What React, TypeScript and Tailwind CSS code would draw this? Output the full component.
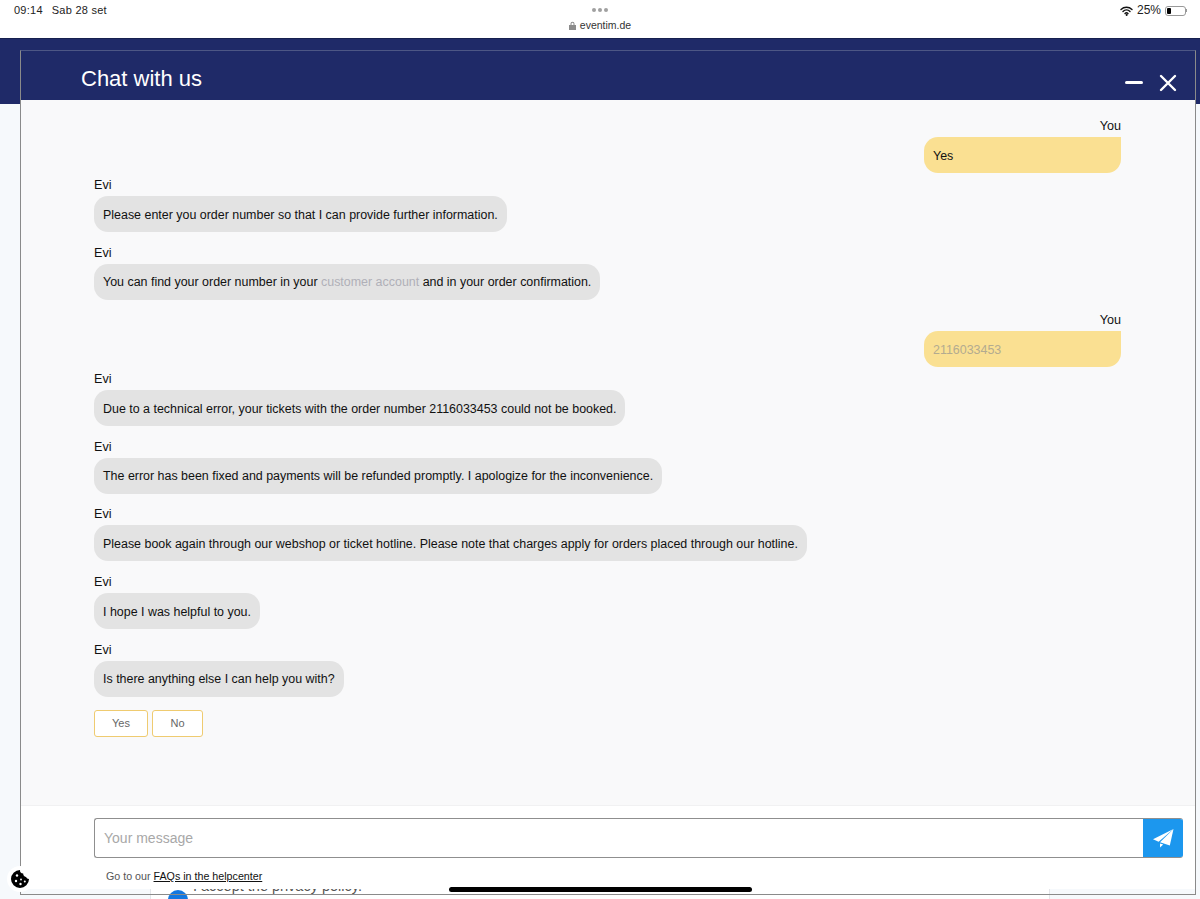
type Message = { from: "Evi" | "You"; text: React.ReactNode; muted?: boolean };

const messages: Message[] = [
  { from: "You", text: "Yes" },
  { from: "Evi", text: "Please enter you order number so that I can provide further information." },
  {
    from: "Evi",
    text: (
      <>
        You can find your order number in your <span className="text-[#b0b0b8]">customer account</span> and in your order confirmation.
      </>
    ),
  },
  { from: "You", text: "2116033453", muted: true },
  { from: "Evi", text: "Due to a technical error, your tickets with the order number 2116033453 could not be booked." },
  { from: "Evi", text: "The error has been fixed and payments will be refunded promptly. I apologize for the inconvenience." },
  { from: "Evi", text: "Please book again through our webshop or ticket hotline. Please note that charges apply for orders placed through our hotline." },
  { from: "Evi", text: "I hope I was helpful to you." },
  { from: "Evi", text: "Is there anything else I can help you with?" },
];

export default function App() {
  return (
    <div className="relative h-[899px] w-[1200px] overflow-hidden bg-[#f6f9fc] font-['Liberation_Sans',Arial,sans-serif] text-[#111]">
      <StatusBar />
      <div className="h-[66px] border-t border-[#16204f] bg-[#1f2a68]" />
      <PageBehind />

      <div className="absolute left-[20px] top-[50px] flex h-[845px] w-[1176px] flex-col border border-[#8a8a8a] border-t-[#4d5785]">
        <header className="flex h-[49px] shrink-0 items-center justify-between bg-[#1f2a68] pl-[60px] pr-[18px] pt-[6px] text-white">
          <h1 className="text-[22px] leading-none">Chat with us</h1>
          <div className="mt-[8px] flex items-center gap-[16px]">
            <span className="h-[3px] w-[18px] rounded-sm bg-white" />
            <svg width="18" height="18" viewBox="0 0 18 18" fill="none" stroke="white" strokeWidth="2.4" strokeLinecap="round">
              <path d="M2 2 16 16M16 2 2 16" />
            </svg>
          </div>
        </header>

        <main className="flex flex-1 flex-col bg-[#f9f9fa] pl-[73px] pr-[74px] pt-[17px]">
          {messages.map((m, i) => (
            <Bubble key={i} message={m} />
          ))}
          <div className="mt-[1.4px] flex gap-[4px]">
            <ReplyButton label="Yes" width="w-[54px]" />
            <ReplyButton label="No" width="w-[51px]" />
          </div>
        </main>

        <footer className="relative mb-[5px] h-[84px] shrink-0 border-t border-[#f1f1f2] bg-white pl-[73px] pr-[12px] pt-[12px]">
          <div className="flex h-[40px] overflow-hidden rounded-[3px] border border-[#8f8f8f] border-r-0">
            <div className="flex flex-1 items-center pl-[9px] text-[14px] text-[#a8a8a8]">Your message</div>
            <button className="flex w-[40px] items-center justify-center bg-[#1c97ee]">
              <svg width="21" height="19" viewBox="0 0 21 19" fill="white">
                <path d="M20.5 0 0 10.2l5.6 2.6Z" />
                <path d="M20.5 0 7 13.2l9.8 3.4Z" />
                <path d="M7 14.4V18.6l3.2-3.2Z" />
              </svg>
            </button>
          </div>
          <p className="ml-[12px] mt-[11px] text-[10.7px] leading-[15px] text-[#555]">
            Go to our <span className="text-[#111] underline">FAQs in the helpcenter</span>
          </p>
        </footer>
      </div>

      <CookieButton />
      <div className="absolute left-[449px] top-[887px] h-[5px] w-[303px] rounded-full bg-black" />
    </div>
  );
}

function StatusBar() {
  return (
    <div className="relative flex h-[38px] items-start justify-between bg-white pl-[14px] pr-[13px] pt-[3px] text-[11px] leading-[15px] text-[#222]">
      <div className="flex gap-[9px] tracking-[0.25px]">
        <span>09:14</span>
        <span>Sab 28 set</span>
      </div>
      <div className="absolute left-0 right-0 top-[8px] flex flex-col items-center">
        <div className="flex gap-[2px]">
          <span className="size-[4px] rounded-full bg-[#a0a0a0]" />
          <span className="size-[4px] rounded-full bg-[#a0a0a0]" />
          <span className="size-[4px] rounded-full bg-[#a0a0a0]" />
        </div>
        <div className="mt-[6px] flex items-center gap-[4px] text-[10.5px] leading-[14px] text-[#333]">
          <svg width="7" height="9" viewBox="0 0 7 9" fill="#8c8c8c">
            <path d="M1.5 4V2.8a2 2 0 0 1 4 0V4H7v5H0V4Zm1 0h2V2.8a1 1 0 0 0-2 0Z" />
          </svg>
          eventim.de
        </div>
      </div>
      <div className="flex items-center gap-[3px]">
        <svg width="13" height="10" viewBox="0 0 13 10" fill="none" stroke="#111" strokeLinecap="round">
          <path d="M1 3.4a8 8 0 0 1 11 0" strokeWidth="1.4" />
          <path d="M3 5.4a5 5 0 0 1 7 0" strokeWidth="1.4" />
          <path d="M5 7.4a2.2 2.2 0 0 1 3 0" strokeWidth="1.4" />
          <circle cx="6.5" cy="8.9" r=".6" fill="#111" />
        </svg>
        <span className="ml-[1px] text-[12px]">25%</span>
        <div className="ml-[1px] flex items-center">
          <div className="flex h-[10px] w-[21px] items-center rounded-[3px] border border-[#999] p-[1px]">
            <span className="h-full w-[4px] rounded-[1px] bg-black" />
          </div>
          <span className="h-[3px] w-[1px] bg-[#999]" />
        </div>
      </div>
    </div>
  );
}

function PageBehind() {
  return (
    <div className="absolute left-[150px] top-[104px] h-[795px] w-[900px] border-x border-[#e4e6ea] bg-white">
      <span className="absolute left-[17px] top-[786px] size-[20px] rounded-full bg-[#1477e0]" />
      <span className="absolute left-[42px] top-[774px] text-[14.5px] leading-[16px] text-[#555]">I accept the privacy policy.</span>
    </div>
  );
}

function Bubble({ message }: { message: Message }) {
  const mine = message.from === "You";
  return (
    <div className={`flex flex-col ${mine ? "mb-[3px] items-end" : "mb-[11.6px] items-start"}`}>
      <div className="h-[20px] text-[12.6px] leading-[19px]">{message.from}</div>
      <div
        className={`flex h-[36px] items-center pt-[2px] text-[12.45px] ${
          mine
            ? "w-[197px] rounded-[14px] rounded-tr-none bg-[#fae092] pl-[9px]"
            : "rounded-[14px] bg-[#e3e3e3] px-[9px]"
        } ${message.muted ? "text-[#b3ab90]" : ""}`}
      >
        <span>{message.text}</span>
      </div>
    </div>
  );
}

function ReplyButton({ label, width }: { label: string; width: string }) {
  return (
    <button className={`flex h-[27px] ${width} items-center justify-center rounded-[3px] border-[1.5px] border-[#efcb70] bg-white text-[11px] text-[#666]`}>
      {label}
    </button>
  );
}

function CookieButton() {
  return (
    <div className="absolute left-[7px] top-[866px] flex size-[26px] items-center justify-center rounded-full bg-white">
      <svg width="18" height="18" viewBox="0 0 18 18">
        <path d="M9 0a3.4 3.4 0 0 0 3.2 3.6A3.4 3.4 0 0 0 15 7a3.2 3.2 0 0 0 3 2 9 9 0 1 1-9-9Z" fill="#000" />
        <circle cx="6" cy="5.5" r="1.2" fill="#fff" />
        <circle cx="5" cy="11" r="1.2" fill="#fff" />
        <circle cx="10" cy="9.5" r=".9" fill="#fff" />
        <circle cx="9.5" cy="14" r="1.2" fill="#fff" />
        <circle cx="13.8" cy="11.6" r="1" fill="#fff" />
      </svg>
    </div>
  );
}
